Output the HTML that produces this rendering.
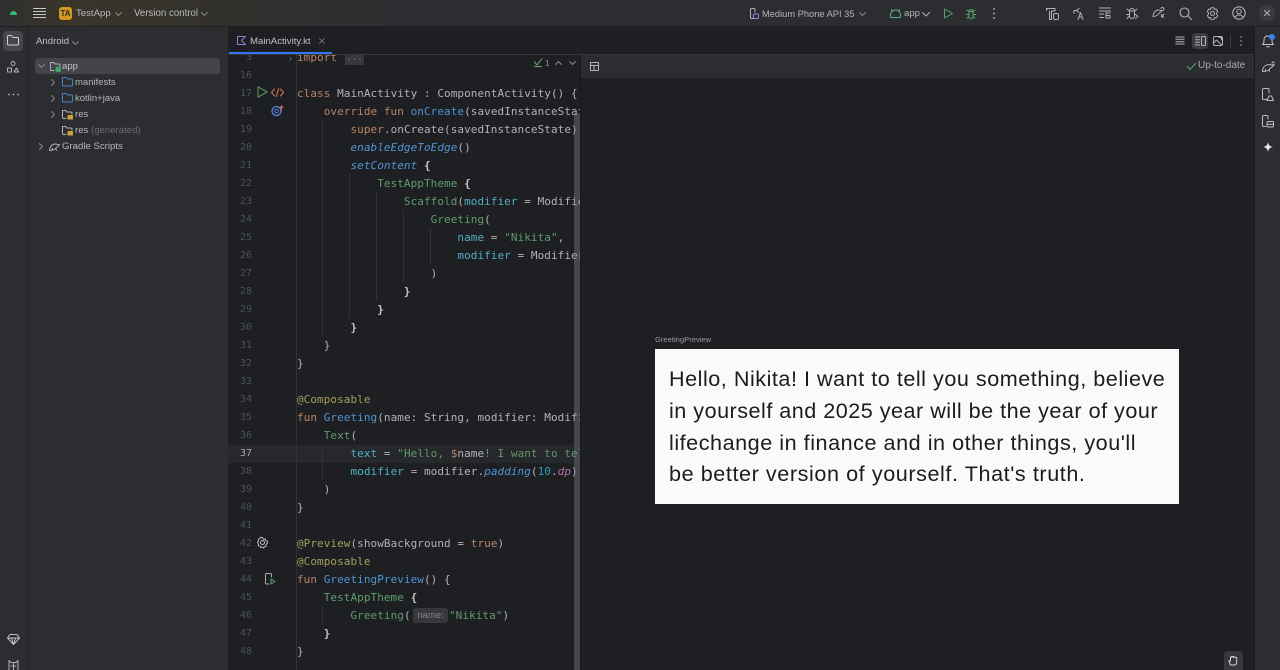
<!DOCTYPE html>
<html><head><meta charset="utf-8"><style>
html,body{margin:0;padding:0;width:1280px;height:670px;overflow:hidden;background:#1e1f22}
body{position:relative;font-family:"Liberation Sans",sans-serif;font-size:10px;color:#b4b6bc}
#w{position:absolute;left:0;top:0;width:1280px;height:670px;overflow:hidden;filter:blur(.3px)}
.a{position:absolute}
.t{position:absolute;white-space:nowrap;line-height:16px;height:16px}
svg{position:absolute;overflow:visible;fill:none;stroke:#b0b2b8;stroke-width:1;stroke-linecap:round;stroke-linejoin:round}
#code{position:absolute;left:228px;top:55px;width:352px;height:615px;overflow:hidden}
.l{position:absolute;left:69px;white-space:pre;font:11px/18px "DejaVu Sans Mono",monospace;letter-spacing:.06px;color:#b0b2b8;height:18px}
.n{position:absolute;left:0;width:24px;text-align:right;font:10px/18px "DejaVu Sans Mono",monospace;color:#4b5059;height:18px}
.k{color:#b98468}.f{color:#4f94d4}.g{color:#5d9e6a}.p{color:#4fb0c4}.s{color:#62996b}.an{color:#a39f5a}.i{font-style:italic;color:#4f94d4}.nu{color:#2aa0ac}.d{color:#b072a8;font-style:italic}
.guide{position:absolute;width:1px;background:#2f3134}
.pv{position:absolute;left:669px;white-space:nowrap;font:21.6px/32px "Liberation Sans",sans-serif;color:#1c1b1f;height:32px}
.ch{stroke:#85878d}
</style></head><body><div id="w">

<!-- top bar -->
<div class="a" style="left:0;top:0;width:1280px;height:26px;background:linear-gradient(90deg,#2f3030 0,#3a3429 70px,#35322c 170px,#2b2d30 400px,#2b2d30 100%)"></div>
<div class="a" style="left:0;top:26px;width:1280px;height:1px;background:#1e1f22"></div>

<svg style="left:10px;top:11px" width="7" height="4" viewBox="0 0 7 4"><path d="M.5 3.500a3 3 0 0 1 6 0z" fill="#35b874" stroke="#35b874"/></svg>
<svg style="left:33px;top:8px" width="13" height="11" viewBox="0 0 13 11"><path d="M0 .5h13M0 3.500h13M0 6.500h13M0 9.500h13" stroke="#c4c6cc" stroke-linecap="butt"/></svg>
<div class="a" style="left:59px;top:7px;width:13px;height:13px;border-radius:3px;background:#d19a1e;color:#2b2d30;font-size:8px;font-weight:bold;line-height:13px;text-align:center">TA</div>
<div class="t" style="left:76px;top:6px;color:#b8bac0;font-size:9.6px">TestApp</div>
<svg style="left:115px;top:12px" width="7" height="4" viewBox="0 0 7 4"><path class="ch" d="M.5.500l3 3 3-3"/></svg>
<div class="t" style="left:134px;top:6px;color:#b8bac0;font-size:9.7px">Version control</div>
<svg style="left:201px;top:12px" width="7" height="4" viewBox="0 0 7 4"><path class="ch" d="M.5.500l3 3 3-3"/></svg>

<svg style="left:750px;top:8px" width="9" height="11" viewBox="0 0 9 11"><path d="M4 10.500H1.500a1 1 0 0 1-1-1V1.500a1 1 0 0 1 1-1H4a1 1 0 0 1 1 1V4"/><rect x="3.500" y="6" width="5" height="4.500" rx="1" stroke="#a07fd0"/></svg>
<div class="t" style="left:762px;top:6px;font-size:9.3px">Medium Phone API 35</div>
<svg style="left:859px;top:12px" width="7" height="4" viewBox="0 0 7 4"><path class="ch" d="M.5.500l3 3 3-3"/></svg>
<svg style="left:890px;top:9px" width="11" height="9" viewBox="0 0 11 9"><path d="M.5 8.500V6a5 5 0 0 1 10 0v2.500zM2.500 2.500L1.500.5M8.500 2.500l1-2" stroke="#4fb07a"/></svg>
<div class="t" style="left:904px;top:6px;font-size:9.6px">app</div>
<svg style="left:922px;top:12px" width="8" height="5" viewBox="0 0 8 5"><path d="M.5.500l3.500 3.500 3.500-3.500"/></svg>
<svg style="left:944px;top:8px" width="9" height="11" viewBox="0 0 9 11"><path d="M.5 1v9l8-4.500z" stroke="#55a86a"/></svg>
<svg style="left:966px;top:8px" width="10" height="11" viewBox="0 0 10 11"><path d="M3 3.500h4v5.500a2 2 0 0 1-4 0zM3 3.500a2 2 0 0 1 4 0M1 2l2 1.500M9 2L7 3.500M.5 6.500H3M9.500 6.500H7M1 10l2-1.500M9 10L7 8.500" stroke="#5aa86b"/></svg>
<svg style="left:992px;top:8px" width="4" height="11" viewBox="0 0 4 11"><path d="M2 1h.01M2 5.500h.01M2 10h.01" stroke-width="1.700" stroke="#c4c6cc"/></svg>

<svg style="left:1046px;top:7px" width="13" height="13" viewBox="0 0 13 13"><path d="M.5 3V1.500h8.500V4H5.500v2.500M3.500 4v8.500h2V6.500M1 1.500L.5 3.500"/><rect x="7.500" y="6.500" width="5" height="6" rx="1.500"/></svg>
<svg style="left:1073px;top:7px" width="12" height="13" viewBox="0 0 12 13"><path d="M6 1.500L3.500 3.500 6 5.500M3.500 3.500H1v3M5 12.500l2.500-7 2.500 7M6 10h3"/></svg>
<svg style="left:1099px;top:7px" width="12" height="12" viewBox="0 0 12 12"><path d="M.5 1h11M.5 4h11M.5 7h4M.5 10.500h4M7 6h4M7 6v5h4V8.500H7"/></svg>
<svg style="left:1126px;top:7px" width="13" height="13" viewBox="0 0 13 13"><path d="M3.500 4h5v5a2.500 2.500 0 0 1-5 0zM3.500 4a2.500 2.500 0 0 1 5 0M1 2l2.500 2M11 2L8.500 4M.5 7.500h3M1 11.500L3.500 9M9.500 7.500l2.500 2-2.500 2"/></svg>
<svg style="left:1152px;top:7px" width="13" height="12" viewBox="0 0 13 12"><path d="M1 9.500c0-3 2-6 5-6.500 2-.3 2.500 1 4 .5-.5 1.500-2 1.500-3 3-1 1.300-3 3-6 3zM9 1.500a1.500 1.500 0 1 1 1.500 2M12 7l-2.500 3M9.500 7.500v2.500H12"/></svg>
<svg style="left:1179px;top:7px" width="13" height="13" viewBox="0 0 13 13"><circle cx="5.500" cy="5.500" r="4.500" stroke-width="1.100"/><path d="M9 9l3.500 3.500" stroke-width="1.100"/></svg>
<svg style="left:1206px;top:7px" width="13" height="13" viewBox="0 0 13 13"><path d="M5 .7h3l.5 1.800 1.700-.5 1.500 2.500L10.500 6v1l1.200 1.500-1.500 2.500-1.700-.5L8 12.300H5l-.5-1.800-1.700.5-1.500-2.500L2.500 7V6L1.300 4.500 2.800 2l1.700.5z"/><circle cx="6.500" cy="6.500" r="2"/></svg>
<svg style="left:1232px;top:6px" width="14" height="14" viewBox="0 0 14 14"><circle cx="7" cy="7" r="6.200" stroke-width="1.100"/><circle cx="7" cy="5.500" r="2.200"/><path d="M2.800 11.500c1-2 2.500-2.500 4.200-2.500s3.200.5 4.200 2.500"/></svg>
<div class="a" style="left:1259px;top:5px;width:16px;height:16px;border-radius:8px;background:#393b3f"></div>
<svg style="left:1264px;top:10px" width="6" height="6" viewBox="0 0 6 6"><path d="M.5.500l5 5M5.500.500l-5 5" stroke="#b0b2b8"/></svg>

<!-- left rail -->
<div class="a" style="left:0;top:27px;width:27px;height:643px;background:#2b2d30"></div>
<div class="a" style="left:27px;top:27px;width:1px;height:643px;background:#232427"></div>
<div class="a" style="left:3px;top:31px;width:20px;height:20px;border-radius:4px;background:#45474b"></div>
<svg style="left:7px;top:35px" width="12" height="11" viewBox="0 0 12 11"><path d="M.5 9V1.500a1 1 0 0 1 1-1h3L6 2.500h4.500a1 1 0 0 1 1 1V9a1 1 0 0 1-1 1h-9a1 1 0 0 1-1-1z" stroke="#cfd1d6"/></svg>
<svg style="left:7px;top:61px" width="12" height="12" viewBox="0 0 12 12"><circle cx="6" cy="2.500" r="2"/><rect x=".5" y="7" width="4" height="4"/><path d="M7 11l2.500-4 2 4z"/></svg>
<svg style="left:8px;top:93px" width="11" height="3" viewBox="0 0 11 3"><path d="M1 1.500h.01M5.500 1.500h.01M10 1.500h.01" stroke-width="1.700" stroke="#b8bac0"/></svg>
<svg style="left:7px;top:634px" width="13" height="11" viewBox="0 0 13 11"><path d="M3 .5h7L12.500 4 6.500 10.500.5 4zM.5 4h12M4.500 4l2 6.500 2-6.500" stroke="#c0c2c8"/></svg>
<svg style="left:8px;top:660px" width="11" height="11" viewBox="0 0 11 11"><path d="M1 .5l2 2h5l2-2v10H1zM3 6h5M5.500 2.500v8" stroke="#b0b2b8"/></svg>

<!-- project panel -->
<div class="a" style="left:28px;top:27px;width:200px;height:643px;background:#2b2d30"></div>
<div class="t" style="left:36px;top:34px;font-size:9.6px;color:#c0c2c8">Android</div>
<svg style="left:72px;top:41px" width="7" height="4" viewBox="0 0 7 4"><path class="ch" d="M.5.500l3 3 3-3"/></svg>
<div class="a" style="left:35px;top:58px;width:185px;height:16px;border-radius:3px;background:#43454a"></div>
<svg style="left:38px;top:64px" width="7" height="4" viewBox="0 0 7 4"><path class="ch" d="M.5.500l3 3 3-3"/></svg>
<svg style="left:50px;top:61px" width="11" height="11" viewBox="0 0 11 11"><path d="M4 9.500H1.500a1 1 0 0 1-1-1v-7h3l1.500 1.500h4a1 1 0 0 1 1 1V5"/><rect x="6" y="6" width="4.500" height="4.500" rx="1" fill="#3fa566" stroke="#3fa566"/></svg>
<div class="t" style="left:62px;top:59px;color:#c0c2c8;font-size:9.6px">app</div>

<svg style="left:51px;top:79px" width="4" height="7" viewBox="0 0 4 7"><path class="ch" d="M.5.500l3 3-3 3"/></svg>
<svg style="left:62px;top:77px" width="11" height="10" viewBox="0 0 11 10"><path d="M.5 8.500v-7.500a.5.500 0 0 1 .5-.5h3L5.500 2H10a.5.500 0 0 1 .5.500v6a.5.500 0 0 1-.5.500H1a.5.500 0 0 1-.5-.5z" stroke="#4f7fc4"/></svg>
<div class="t" style="left:75px;top:75px;font-size:9.5px">manifests</div>

<svg style="left:51px;top:95px" width="4" height="7" viewBox="0 0 4 7"><path class="ch" d="M.5.500l3 3-3 3"/></svg>
<svg style="left:62px;top:93px" width="11" height="10" viewBox="0 0 11 10"><path d="M.5 8.500v-7.500a.5.500 0 0 1 .5-.5h3L5.500 2H10a.5.500 0 0 1 .5.500v6a.5.500 0 0 1-.5.500H1a.5.500 0 0 1-.5-.5z" stroke="#4f7fc4"/></svg>
<div class="t" style="left:75px;top:91px;font-size:9.5px">kotlin+java</div>

<svg style="left:51px;top:111px" width="4" height="7" viewBox="0 0 4 7"><path class="ch" d="M.5.500l3 3-3 3"/></svg>
<svg style="left:62px;top:109px" width="11" height="11" viewBox="0 0 11 11"><path d="M4 9.500H1.500a1 1 0 0 1-1-1v-7h3l1.500 1.500h4a1 1 0 0 1 1 1V5"/><rect x="6" y="6.500" width="4.500" height="3.500" fill="#c9a23a" stroke="#c9a23a"/></svg>
<div class="t" style="left:75px;top:107px;font-size:9.6px">res</div>

<svg style="left:62px;top:125px" width="11" height="11" viewBox="0 0 11 11"><path d="M4 9.500H1.500a1 1 0 0 1-1-1v-7h3l1.500 1.500h4a1 1 0 0 1 1 1V5"/><rect x="6" y="6.500" width="4.500" height="3.500" fill="#c9a23a" stroke="#c9a23a"/></svg>
<div class="t" style="left:75px;top:123px;font-size:9.6px">res <span style="color:#6a6d73">(generated)</span></div>

<svg style="left:39px;top:143px" width="4" height="7" viewBox="0 0 4 7"><path class="ch" d="M.5.500l3 3-3 3"/></svg>
<svg style="left:49px;top:142px" width="12" height="10" viewBox="0 0 12 10"><path d="M.5 8.500c0-3 2-6 5-6.500 2-.3 2.500 1 5 .5-.5 2-2.500 2-3.500 3.500-1 1.300-3 2.500-6.500 2.500zM3 8.500l.5-2M7 7l.5 1.500"/></svg>
<div class="t" style="left:62px;top:139px;font-size:9.6px">Gradle Scripts</div>

<!-- tabs -->
<div class="a" style="left:228px;top:27px;width:1026px;height:27px;background:#1e1f22"></div>
<div class="a" style="left:228px;top:54px;width:1026px;height:1px;background:#35373b"></div>
<svg style="left:237px;top:36px" width="9" height="9" viewBox="0 0 9 9"><path d="M.5.500h8L4.500 4.500l4 4h-8z" stroke="#8f7fd8"/></svg>
<div class="t" style="left:250px;top:34px;font-size:9.6px;color:#c0c2c8">MainActivity.kt</div>
<svg style="left:319px;top:38px" width="6" height="6" viewBox="0 0 6 6"><path d="M.5.500l5 5M5.500.500l-5 5" stroke="#6a6c72"/></svg>

<svg style="left:1175px;top:36px" width="10" height="9" viewBox="0 0 10 9"><path d="M.5 1h9M.5 3.300h9M.5 5.700h9M.5 8h9" stroke-linecap="butt"/></svg>
<div class="a" style="left:1192px;top:33px;width:16px;height:16px;border-radius:3px;background:#3a3c40"></div>
<svg style="left:1195px;top:36px" width="11" height="10" viewBox="0 0 11 10"><path d="M.5 1h4M.5 3.700h4M.5 6.300h4M.5 9h4"/><rect x="6.500" y=".5" width="4" height="9" rx="1"/></svg>
<svg style="left:1213px;top:36px" width="10" height="10" viewBox="0 0 10 10"><rect x=".5" y=".5" width="9" height="9" rx="1.500"/><path d="M.5 7l3-3 5 5M6 1.500h2.500V4" /></svg>
<div class="a" style="left:1230px;top:34px;width:1px;height:14px;background:#393b40"></div>
<svg style="left:1239px;top:36px" width="4" height="10" viewBox="0 0 4 10"><path d="M2 1h.01M2 5h.01M2 9h.01" stroke-width="1.500"/></svg>

<!-- code -->
<div id="code">
<div class="a" style="left:0;top:390px;width:346px;height:18px;background:#26282b"></div>
<div class="guide" style="left:68px;top:0;height:615px"></div>
<div class="guide" style="left:94px;top:65px;height:216px"></div>
<div class="guide" style="left:121px;top:119px;height:144px"></div>
<div class="guide" style="left:148px;top:137px;height:108px"></div>
<div class="guide" style="left:175px;top:155px;height:72px"></div>
<div class="guide" style="left:202px;top:173px;height:36px"></div>
<div class="guide" style="left:94px;top:389px;height:36px"></div>
<div class="guide" style="left:94px;top:551px;height:18px"></div>

<div class="n" style="top:-6px">3</div><div class="l" style="top:-6px"><span class="k">import</span></div>
<div class="a" style="left:117px;top:0;width:19px;height:10px;background:#36383b;color:#7a7c82;font:9px/6px 'DejaVu Sans Mono',monospace;text-align:center">...</div>
<div class="a" style="left:61px;top:-1px;color:#6e7075;font-size:9px;line-height:9px">&#8250;</div>
<div class="n" style="top:12px">16</div>
<div class="n" style="top:30px">17</div><div class="l" style="top:30px"><span class="k">class</span> MainActivity : ComponentActivity() {</div>
<div class="n" style="top:48px">18</div><div class="l" style="top:48px">    <span class="k">override fun</span> <span class="f">onCreate</span>(savedInstanceState: Bundle?) {</div>
<div class="n" style="top:66px">19</div><div class="l" style="top:66px">        <span class="k">super</span>.onCreate(savedInstanceState)</div>
<div class="n" style="top:84px">20</div><div class="l" style="top:84px">        <span class="i">enableEdgeToEdge</span>()</div>
<div class="n" style="top:102px">21</div><div class="l" style="top:102px">        <span class="i">setContent</span> <b style="color:#c4c6cc">{</b></div>
<div class="n" style="top:120px">22</div><div class="l" style="top:120px">            <span class="g">TestAppTheme</span> <b style="color:#c4c6cc">{</b></div>
<div class="n" style="top:138px">23</div><div class="l" style="top:138px">                <span class="g">Scaffold</span>(<span class="p">modifier</span> = Modifier.fillMaxSize())</div>
<div class="n" style="top:156px">24</div><div class="l" style="top:156px">                    <span class="g">Greeting</span>(</div>
<div class="n" style="top:174px">25</div><div class="l" style="top:174px">                        <span class="p">name</span> = <span class="s">"Nikita"</span>,</div>
<div class="n" style="top:192px">26</div><div class="l" style="top:192px">                        <span class="p">modifier</span> = Modifier.padding()</div>
<div class="n" style="top:210px">27</div><div class="l" style="top:210px">                    )</div>
<div class="n" style="top:228px">28</div><div class="l" style="top:228px">                <b style="color:#c4c6cc">}</b></div>
<div class="n" style="top:246px">29</div><div class="l" style="top:246px">            <b style="color:#c4c6cc">}</b></div>
<div class="n" style="top:264px">30</div><div class="l" style="top:264px">        <b style="color:#c4c6cc">}</b></div>
<div class="n" style="top:282px">31</div><div class="l" style="top:282px">    }</div>
<div class="n" style="top:300px">32</div><div class="l" style="top:300px">}</div>
<div class="n" style="top:318px">33</div>
<div class="n" style="top:336px">34</div><div class="l" style="top:336px"><span class="an">@Composable</span></div>
<div class="n" style="top:354px">35</div><div class="l" style="top:354px"><span class="k">fun</span> <span class="f">Greeting</span>(name: String, modifier: Modifier = Modifier) {</div>
<div class="n" style="top:372px">36</div><div class="l" style="top:372px">    <span class="g">Text</span>(</div>
<div class="n" style="top:390px;color:#a8aab0">37</div><div class="l" style="top:390px">        <span class="p">text</span> = <span class="s">"Hello, </span><span class="k">$</span>name<span class="s">! I want to tell you something</span></div>
<div class="n" style="top:408px">38</div><div class="l" style="top:408px">        <span class="p">modifier</span> = modifier.<span class="i">padding</span>(<span class="nu">10</span>.<span class="d">dp</span>)</div>
<div class="n" style="top:426px">39</div><div class="l" style="top:426px">    )</div>
<div class="n" style="top:444px">40</div><div class="l" style="top:444px">}</div>
<div class="n" style="top:462px">41</div>
<div class="n" style="top:480px">42</div><div class="l" style="top:480px"><span class="an">@Preview</span>(showBackground = <span class="k">true</span>)</div>
<div class="n" style="top:498px">43</div><div class="l" style="top:498px"><span class="an">@Composable</span></div>
<div class="n" style="top:516px">44</div><div class="l" style="top:516px"><span class="k">fun</span> <span class="f">GreetingPreview</span>() {</div>
<div class="n" style="top:534px">45</div><div class="l" style="top:534px">    <span class="g">TestAppTheme</span> <b style="color:#c4c6cc">{</b></div>
<div class="n" style="top:552px">46</div><div class="l" style="top:552px">        <span class="g">Greeting</span>(</div>
<div class="a" style="left:185px;top:553px;width:35px;height:15px;background:#36383b;border-radius:3px;color:#85878c;font-size:9.6px;line-height:15px;text-align:center">name:</div>
<div class="l" style="top:552px;left:221px"><span class="s">"Nikita"</span>)</div>
<div class="n" style="top:570px">47</div><div class="l" style="top:570px">    <b style="color:#c4c6cc">}</b></div>
<div class="n" style="top:588px">48</div><div class="l" style="top:588px">}</div>
<div class="a" style="left:346px;top:58px;width:6px;height:557px;background:rgba(135,137,142,.38)"></div>
</div>

<!-- tab underline sits above the clipped code -->
<div class="a" style="left:229px;top:52px;width:103px;height:2px;background:#3574f0"></div>

<!-- inspection widget -->
<svg style="left:534px;top:58px" width="10" height="9" viewBox="0 0 10 9"><path d="M.5 4l2.500 3 5-6.500M.5 8.500c1.500-1 2 1 3.500 0s2 1 3.500 0" stroke="#6aab73"/></svg>
<div class="t" style="left:545px;top:55px;font-size:8.6px;color:#8a8c92">1</div>
<svg style="left:555px;top:61px" width="7" height="4" viewBox="0 0 7 4"><path d="M.5 3.500l3-3 3 3" stroke="#8a8c92"/></svg>
<svg style="left:569px;top:61px" width="7" height="4" viewBox="0 0 7 4"><path d="M.5.500l3 3 3-3" stroke="#8a8c92"/></svg>

<!-- gutter icons -->
<svg style="left:257px;top:86px" width="11" height="12" viewBox="0 0 11 12"><path d="M1 .8v10.400l9-5.200z" stroke="#57965c" stroke-width="1.100"/></svg>
<svg style="left:271px;top:88px" width="13" height="9" viewBox="0 0 13 9"><path d="M3.500 1L.5 4.500l3 3.500M9.500 1l3 3.500-3 3.500M7.700.5L5.300 8.500" stroke="#c9764d" stroke-width="1.100"/></svg>
<svg style="left:271px;top:105px" width="13" height="11" viewBox="0 0 13 11"><circle cx="5.500" cy="6" r="4.500" stroke="#4f86e0" stroke-width="1.300"/><circle cx="5.500" cy="6" r="1.800" stroke="#4f86e0"/><path d="M10.500 5V1M9 2.500l1.500-1.500 1.500 1.500" stroke="#e06c5f"/></svg>
<svg style="left:257px;top:537px" width="11" height="11" viewBox="0 0 11 11"><path d="M5.500 .8l1 1.500 1.800-.3.600 1.700 1.700.6-.3 1.700 0 .2-1.400 1.300.3 1.700-1.700.6-1 1.200-1-1-1.700.6-1-1.300-1.500-.6.200-1.800-1-1.400 1-1.400-.2-1.800 1.500-.6.700-1.400 1.800.3z" stroke="#bcbec4"/><circle cx="5.500" cy="5.500" r="2" stroke="#bcbec4"/></svg>
<svg style="left:265px;top:573px" width="11" height="12" viewBox="0 0 11 12"><path d="M4 11H1.500a1 1 0 0 1-1-1V1.500a1 1 0 0 1 1-1h4a1 1 0 0 1 1 1V4" stroke="#a8aab0"/><path d="M6 6v5l4-2.500z" stroke="#5aa86b"/></svg>

<!-- preview -->
<div class="a" style="left:580px;top:55px;width:1px;height:615px;background:#18191b"></div>
<div class="a" style="left:581px;top:55px;width:673px;height:23px;background:#2b2d30"></div>
<svg style="left:590px;top:62px" width="10" height="10" viewBox="0 0 10 10"><path d="M.5.500h8v8h-8zM.5 3.500h8M4 3.500v5"/></svg>
<svg style="left:1187px;top:63px" width="9" height="7" viewBox="0 0 9 7"><path d="M.5 3.500l2.500 3 5.500-6" stroke="#5aa86b"/></svg>
<div class="t" style="left:1198px;top:58px;font-size:10px;color:#a8aab0">Up-to-date</div>

<div class="t" style="left:655px;top:332px;font-size:7.6px;color:#9a9ca2">GreetingPreview</div>
<div class="a" style="left:655px;top:349px;width:524px;height:155px;background:#fafafa"></div>
<div class="pv" style="top:363px;letter-spacing:.52px">Hello, Nikita! I want to tell you something, believe</div>
<div class="pv" style="top:395px;letter-spacing:.49px">in yourself and 2025 year will be the year of your</div>
<div class="pv" style="top:427px;letter-spacing:.53px">lifechange in finance and in other things, you'll</div>
<div class="pv" style="top:458px;letter-spacing:.57px">be better version of yourself. That's truth.</div>

<div class="a" style="left:1224px;top:651px;width:19px;height:19px;background:#36383b;border-radius:3px 3px 0 0"></div>
<svg style="left:1228px;top:655px" width="11" height="11" viewBox="0 0 11 11"><path d="M2.500 10L1 6.500c-.3-1 1-1.200 1.500-.5V2.500c0-1 1.200-1 1.300 0 0-1.500 1.700-1.500 1.700 0 .3-1 1.700-.8 1.700.2.500-.7 1.500-.3 1.500.5V7c0 1.500-.7 3-2 3z" stroke="#d0d2d6"/></svg>

<!-- right rail -->
<div class="a" style="left:1254px;top:27px;width:1px;height:643px;background:#1a1b1d"></div>
<div class="a" style="left:1255px;top:27px;width:25px;height:643px;background:#2b2d30"></div>
<svg style="left:1262px;top:34px" width="12" height="14" viewBox="0 0 12 14"><path d="M.5 10.500c1.500-1 1.500-2.500 1.500-4.500 0-2.500 1.500-4 4-4s4 1.500 4 4c0 2 0 3.500 1.500 4.500zM4.500 12.800h3" stroke="#c0c2c8"/></svg>
<div class="a" style="left:1269px;top:34px;width:6px;height:6px;border-radius:3px;background:#3b82e8"></div>
<svg style="left:1262px;top:62px" width="13" height="11" viewBox="0 0 13 11"><path d="M.5 9.500c0-3.500 2-6 5-6.800 2.500-.5 3.500.8 6.500-.2-.5 2.500-3 2.500-4 4-1.300 2-3.500 3-7.500 3zM3 9.500l.5-2M7 8l.5 1.500M10 1a1 1 0 0 1 2 0" stroke="#bcbec4"/></svg>
<svg style="left:1262px;top:88px" width="12" height="13" viewBox="0 0 12 13"><path d="M4.500 11.500h-3a1 1 0 0 1-1-1V1.500a1 1 0 0 1 1-1H6a1 1 0 0 1 1 1V5M5 12.500h6.500L9.500 8h-2.500z" stroke="#bcbec4"/></svg>
<svg style="left:1262px;top:115px" width="12" height="13" viewBox="0 0 12 13"><path d="M3.500 11.500h-2a1 1 0 0 1-1-1V1.500a1 1 0 0 1 1-1H5a1 1 0 0 1 1 1V4" stroke="#bcbec4"/><rect x="5" y="6.500" width="6.500" height="5.500" rx="1" stroke="#bcbec4"/><path d="M5 9.300h6.500" stroke="#bcbec4"/></svg>
<svg style="left:1263px;top:142px" width="10" height="10" viewBox="0 0 10 10"><path d="M5 0c.6 3 1.500 4.300 5 5-3.500.7-4.400 2-5 5-.6-3-1.500-4.300-5-5 3.500-.7 4.400-2 5-5z" fill="#e4e6ea" stroke="none"/></svg>
</div></body></html>
